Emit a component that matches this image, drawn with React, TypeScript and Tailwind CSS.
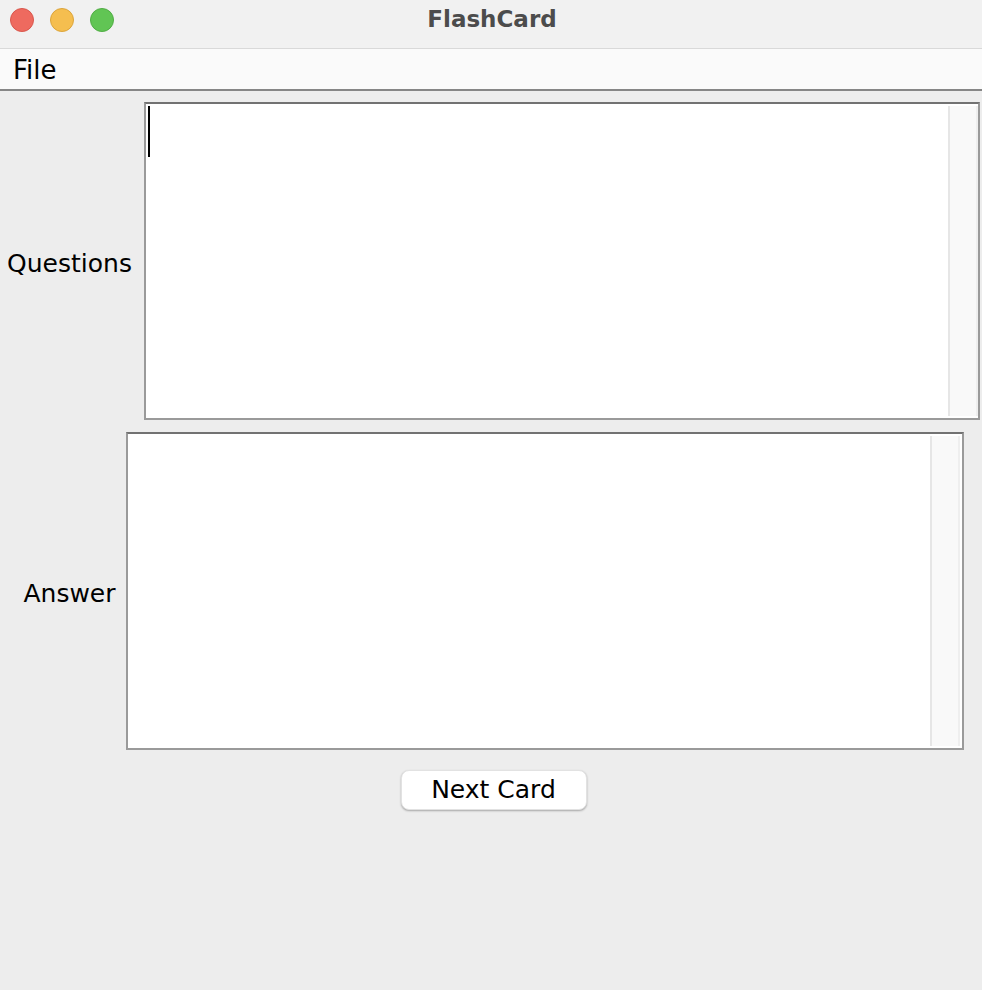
import React from "react";

function TextBox({ width, caret, gapRight }: { width: string; caret?: boolean; gapRight?: boolean }) {
  return (
    <div
      className={`${width} h-[318px] flex border-2 border-[#9a9a9a] border-t-[#727272] bg-white`}
    >
      <div className="flex-1 pl-[2px] pt-[2px]">
        {caret && <div className="w-[2px] h-[51px] bg-black" />}
      </div>
      <div
        className={`w-[30px] my-[2px] bg-[#f9f9f9] border-l-2 border-l-[#e6e6e6] border-r-2 border-r-[#efefef] ${
          gapRight ? "mr-[2px]" : ""
        }`}
      />
    </div>
  );
}

export default function App() {
  return (
    <div
      className="w-[982px] h-[990px] bg-[#ededed] flex flex-col text-black"
      style={{ fontFamily: '"DejaVu Sans", "Liberation Sans", sans-serif' }}
    >
      <div className="h-[49px] bg-[#f1f1f1] border-b border-[#d9d9d9] grid grid-cols-[1fr_auto_1fr] items-center">
        <div className="flex items-center gap-[16px] pl-[10px] pb-[9px]">
          <span className="w-[24px] h-[24px] rounded-full bg-[#ee6a5f] border border-[#d9574d]" />
          <span className="w-[24px] h-[24px] rounded-full bg-[#f5be4f] border border-[#dca53b]" />
          <span className="w-[24px] h-[24px] rounded-full bg-[#61c554] border border-[#51ad45]" />
        </div>
        <div className="text-[23px] font-bold text-[#4c4c4c] pb-[10px] pl-[2px]">FlashCard</div>
        <div />
      </div>

      <div className="h-[42px] bg-[#fafafa] border-b-2 border-[#868686] flex items-center pl-[13px]">
        <span className="text-[26px] leading-none pt-[2px]">File</span>
      </div>

      <div className="flex flex-col items-center pl-[5px] pt-[11px]">
        <div className="flex items-center gap-[12px]">
          <span className="text-[25px] pt-[5px]">Questions</span>
          <TextBox width="w-[836px]" caret />
        </div>
        <div className="flex items-center gap-[10px] mt-[12px]">
          <span className="text-[25px] pt-[5px]">Answer</span>
          <TextBox width="w-[838px]" gapRight />
        </div>
        <button className="mt-[20px] w-[186px] h-[40px] rounded-lg bg-white text-[25px] shadow-[0_1px_2px_rgba(0,0,0,0.3)] border border-[#e2e2e2]">
          Next Card
        </button>
      </div>
    </div>
  );
}
